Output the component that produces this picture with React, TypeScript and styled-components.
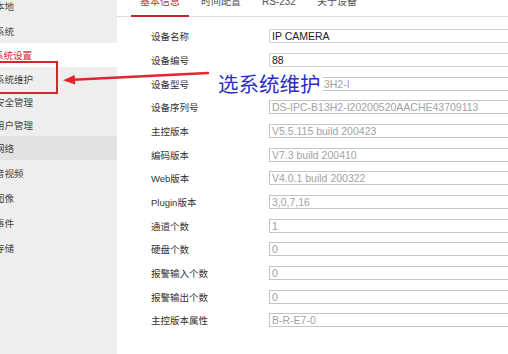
import { createGlobalStyle } from 'styled-components';
import styled from 'styled-components';

const GlobalStyle = createGlobalStyle`
  html, body {
    margin: 0;
    padding: 0;
    background: #ffffff;
    overflow: hidden;
  }
  body {
    font-family: 'Liberation Sans', 'Noto Sans CJK SC', sans-serif;
  }
`;

const Page = styled.div`
  position: relative;
  display: flex;
  width: 508px;
  height: 354px;
  overflow: hidden;
  background: #ffffff;
`;

const Sidebar = styled.div`
  width: 117px;
  flex-shrink: 0;
  background: #eeeeee;
  display: flex;
  flex-direction: column;
  margin-top: -7px;
`;

const MenuGroup = styled.div`
  display: flex;
  flex-direction: column;
`;

const MenuItem = styled.div<{ $h: number; $active?: boolean }>`
  height: ${(p) => p.$h}px;
  display: flex;
  align-items: center;
  padding-left: 0;
  font-size: 9.5px;
  color: #444444;
  background: ${(p) => (p.$active ? '#e2e2e2' : 'transparent')};
  span {
    margin-left: -5px;
  }
`;

const MenuHeader = styled.div`
  height: 24px;
  display: flex;
  align-items: center;
  background: #ffffff;
  font-size: 9.5px;
  color: #d3262c;
  span {
    margin-left: -6px;
  }
`;

const Main = styled.div`
  flex: 1;
  display: flex;
  flex-direction: column;
  min-width: 0;
`;

const TabBar = styled.div`
  display: flex;
  margin-top: -10px;
  padding-left: 14px;
  border-bottom: 1px solid #dddddd;
`;

const Tab = styled.div<{ $active?: boolean }>`
  height: 25px;
  line-height: 24px;
  padding: 0 9px;
  margin-right: 3px;
  font-size: 10px;
  color: ${(p) => (p.$active ? '#c9242c' : '#555555')};
  border-bottom: 2px solid ${(p) => (p.$active ? '#c9242c' : 'transparent')};
  margin-bottom: -1px;
  box-sizing: border-box;
  height: 27px;
`;

const Form = styled.div`
  display: flex;
  flex-direction: column;
  padding-left: 34px;
  margin-top: 7.5px;
`;

const Row = styled.div`
  display: flex;
  align-items: center;
  height: 23.67px;
`;

const Label = styled.div`
  width: 118px;
  flex-shrink: 0;
  font-size: 9.5px;
  color: #333333;
`;

const Field = styled.div<{ $enabled?: boolean }>`
  width: 270px;
  flex-shrink: 0;
  height: 14px;
  box-sizing: border-box;
  border: 1px solid ${(p) => (p.$enabled ? '#d2d2d2' : '#c4c4c4')};
  padding: 0 2px;
  font-size: 10.5px;
  line-height: 12px;
  color: ${(p) => (p.$enabled ? '#222222' : '#a2a2a2')};
  white-space: nowrap;
  overflow: hidden;
`;

const MarkBox = styled.div`
  position: absolute;
  left: -4px;
  top: 61px;
  width: 62px;
  height: 33px;
  box-sizing: border-box;
  border: 2px solid #d8232a;
  pointer-events: none;
`;

const Arrow = styled.svg`
  position: absolute;
  left: 0;
  top: 0;
  pointer-events: none;
`;

const Note = styled.div`
  position: absolute;
  left: 216px;
  top: 71px;
  padding: 0 2px 1px 2px;
  background: #ffffff;
  font-family: 'Noto Sans CJK SC', sans-serif;
  font-size: 20.5px;
  line-height: 24px;
  color: #2c2fc6;
`;

const rows: [string, string, boolean][] = [
  ['设备名称', 'IP CAMERA', true],
  ['设备编号', '88', true],
  ['设备型号', 'DS-IPC-B13H2-I', false],
  ['设备序列号', 'DS-IPC-B13H2-I20200520AACHE43709113', false],
  ['主控版本', 'V5.5.115 build 200423', false],
  ['编码版本', 'V7.3 build 200410', false],
  ['Web版本', 'V4.0.1 build 200322', false],
  ['Plugin版本', '3,0,7,16', false],
  ['通道个数', '1', false],
  ['硬盘个数', '0', false],
  ['报警输入个数', '0', false],
  ['报警输出个数', '0', false],
  ['主控版本属性', 'B-R-E7-0', false],
];

const tabs = ['基本信息', '时间配置', 'RS-232', '关于设备'];

export default function App() {
  return (
    <Page>
      <GlobalStyle />
      <Sidebar>
        <MenuGroup>
          <MenuItem $h={25}><span>本地</span></MenuItem>
          <MenuItem $h={25}><span>系统</span></MenuItem>
        </MenuGroup>
        <MenuHeader><span>系统设置</span></MenuHeader>
        <MenuGroup>
          <MenuItem $h={23}><span>系统维护</span></MenuItem>
          <MenuItem $h={23}><span>安全管理</span></MenuItem>
          <MenuItem $h={23}><span>用户管理</span></MenuItem>
        </MenuGroup>
        <MenuGroup>
          <MenuItem $h={24} $active><span>网络</span></MenuItem>
          <MenuItem $h={25}><span>音视频</span></MenuItem>
          <MenuItem $h={25}><span>图像</span></MenuItem>
          <MenuItem $h={25}><span>事件</span></MenuItem>
          <MenuItem $h={25}><span>存储</span></MenuItem>
        </MenuGroup>
      </Sidebar>
      <Main>
        <TabBar>
          {tabs.map((t, i) => (
            <Tab key={t} $active={i === 0}>{t}</Tab>
          ))}
        </TabBar>
        <Form>
          {rows.map(([label, value, enabled]) => (
            <Row key={label}>
              <Label>{label}</Label>
              <Field $enabled={enabled}>{value}</Field>
            </Row>
          ))}
        </Form>
      </Main>

      {/* annotation overlay */}
      <MarkBox />
      <Arrow width={508} height={354} viewBox="0 0 508 354">
        <line x1={208} y1={73} x2={73} y2={79.7} stroke="#e0262c" strokeWidth={2.4} strokeLinecap="round" />
        <polygon points="63,80.3 75.2,84.6 74.7,75.1" fill="#e0262c" />
      </Arrow>
      <Note>选系统维护</Note>
    </Page>
  );
}
